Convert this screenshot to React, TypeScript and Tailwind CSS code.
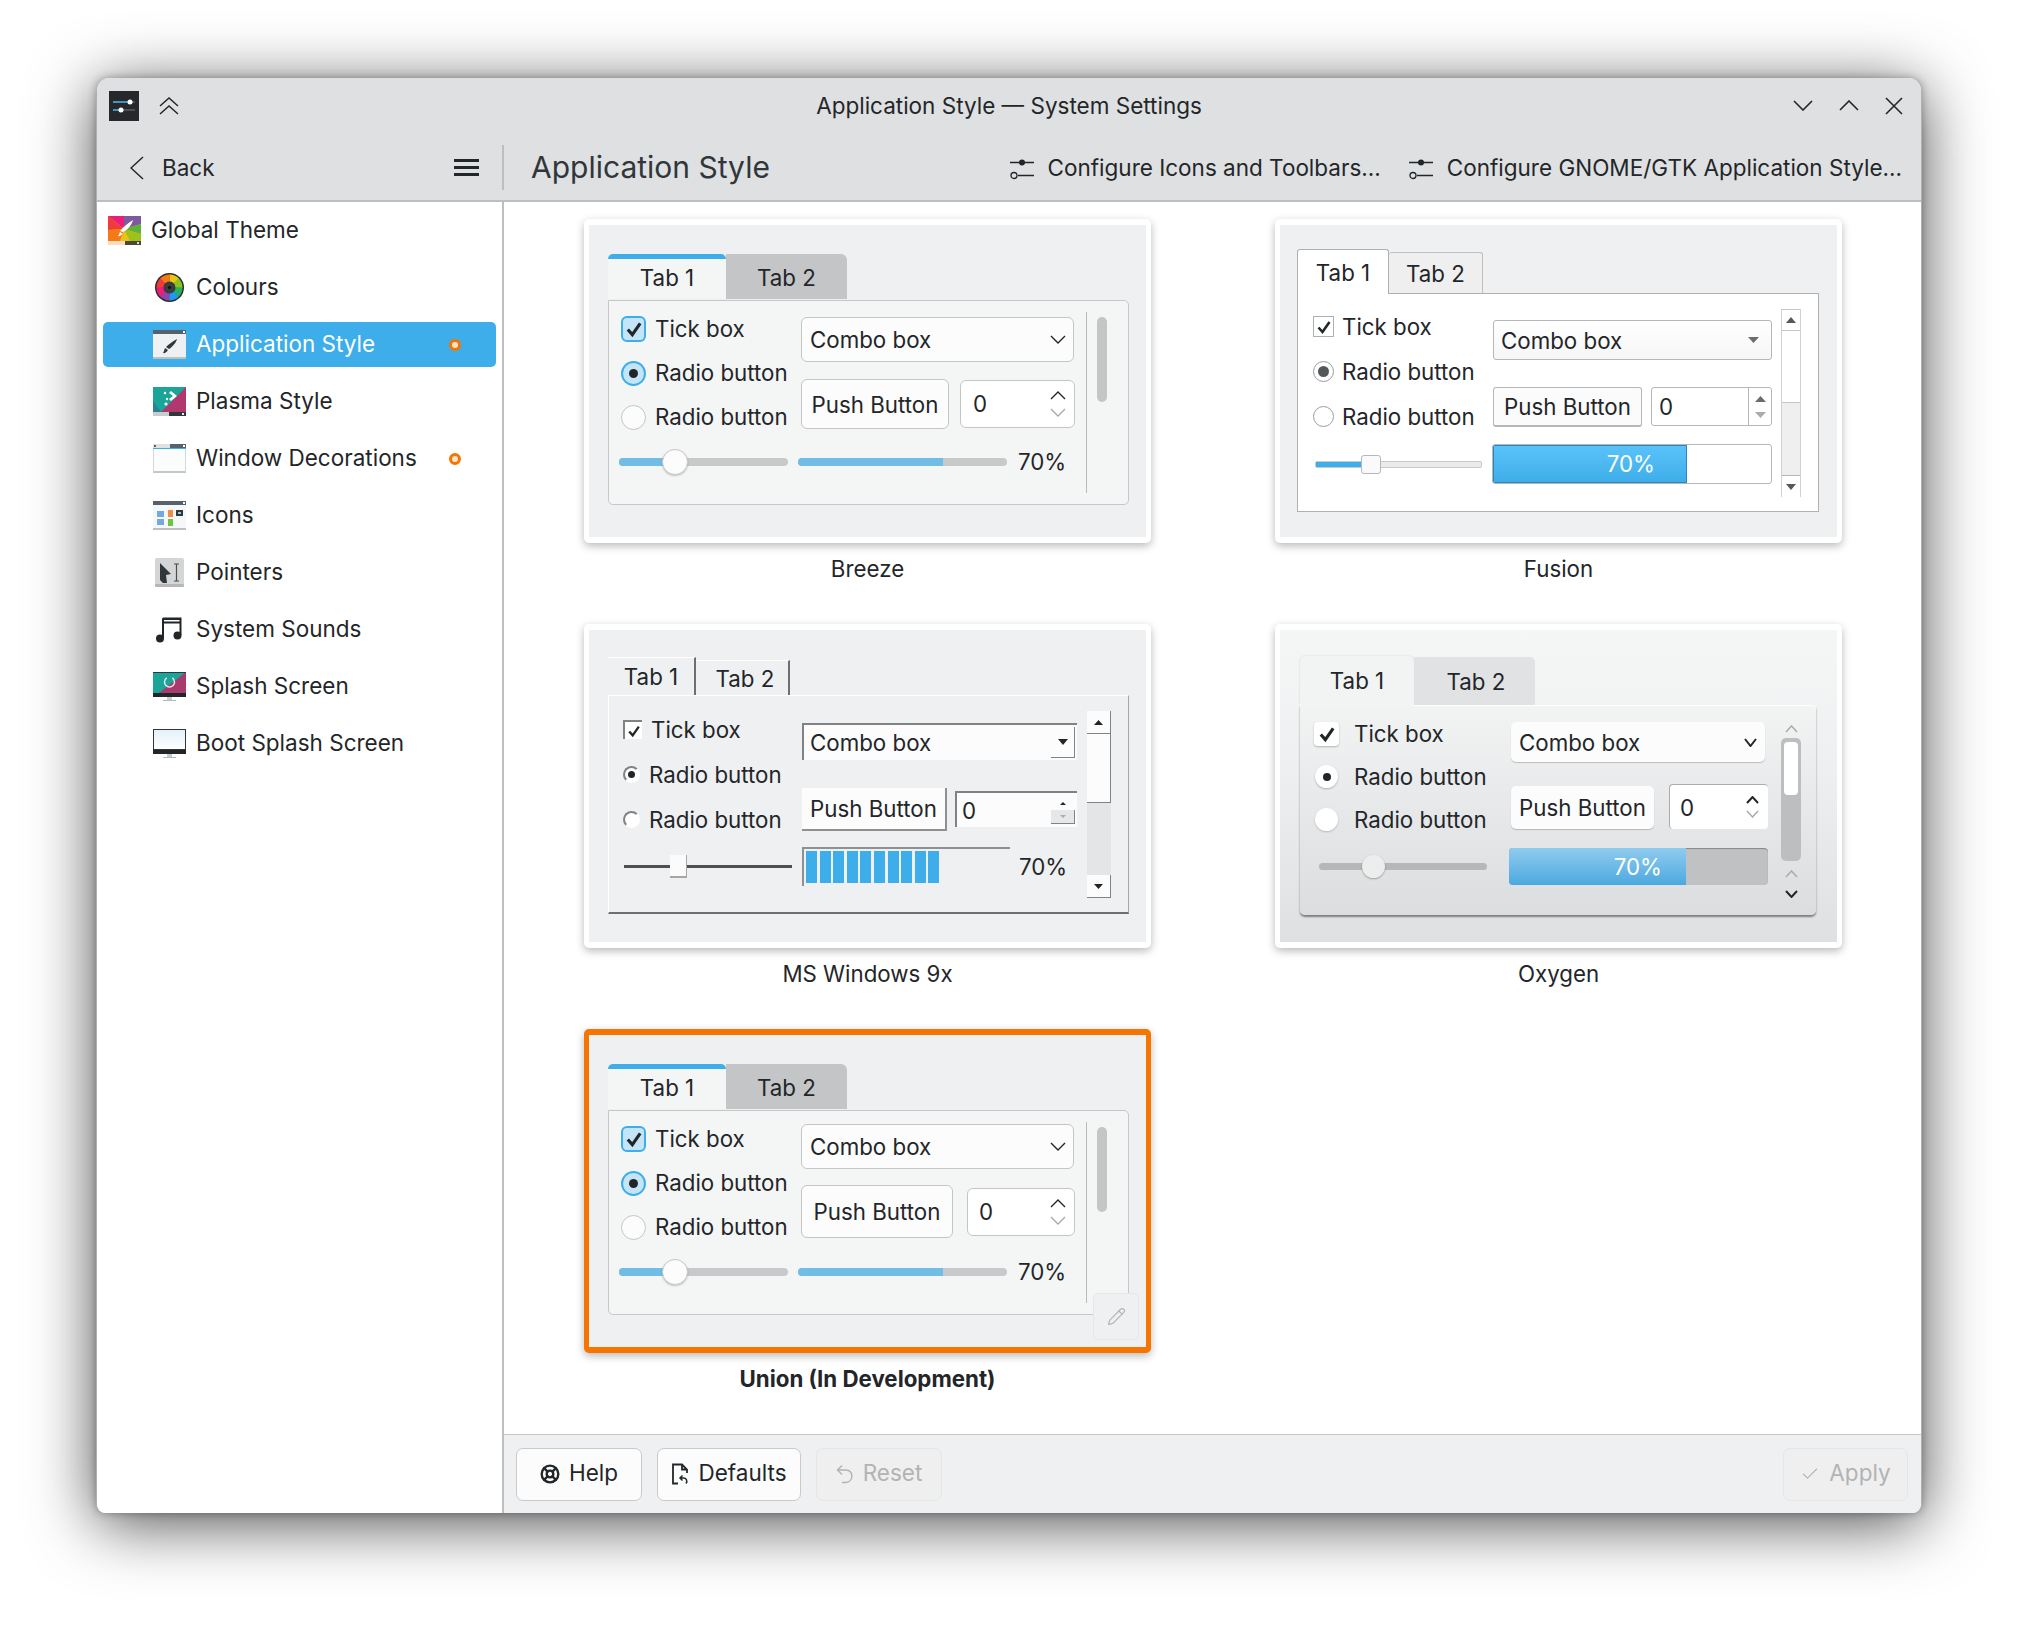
import { Check, LifeBuoy, Pencil } from 'lucide-react';

const T = 'text-[22.3px] leading-[27px] text-[#232629] whitespace-nowrap';
const TB = `${T} -translate-y-px`;

function Chevron({ dir = 'down', w = 16, h = 9, color = '#232629', sw = 1.4 }: { dir?: 'up' | 'down' | 'left'; w?: number; h?: number; color?: string; sw?: number }) {
  const pts =
    dir === 'up' ? `1,${h - 1} ${w / 2},1 ${w - 1},${h - 1}`
    : dir === 'left' ? `${w - 1},1 1,${h / 2} ${w - 1},${h - 1}`
    : `1,1 ${w / 2},${h - 1} ${w - 1},1`;
  return (
    <svg width={w} height={h} className="block shrink-0">
      <polyline points={pts} fill="none" stroke={color} strokeWidth={sw} />
    </svg>
  );
}

function Tri({ up = false, color = '#232629', w = 11, h = 6 }: { up?: boolean; color?: string; w?: number; h?: number }) {
  return (
    <svg width={w} height={h} className="block shrink-0">
      <polygon points={up ? `0,${h} ${w / 2},0 ${w},${h}` : `0,0 ${w / 2},${h} ${w},0`} fill={color} />
    </svg>
  );
}

function Tick({ size = 16, sw = 2.6 }: { size?: number; sw?: number }) {
  return (
    <svg width={size} height={size} viewBox="0 0 16 16" className="block">
      <polyline points="2.5,8.5 6.5,13 13.5,3" fill="none" stroke="#232629" strokeWidth={sw} />
    </svg>
  );
}

/* ---------- sidebar icons ---------- */

function Rainbow() {
  return (
    <>
      <rect width="33" height="25" fill="#e8c31a" />
      <polygon points="0,0 16,0 16,13" fill="#e91e78" />
      <polygon points="0,0 0,14 16,13" fill="#ef3b3b" />
      <polygon points="0,14 0,25 12,25 16,13" fill="#f47a16" />
      <polygon points="16,0 33,0 33,8 16,13" fill="#7c5a9e" />
      <polygon points="33,8 33,18 16,13" fill="#5fb13d" />
      <polygon points="33,18 33,25 22,25 16,13" fill="#9fc11a" />
    </>
  );
}

function GlobalThemeIcon() {
  return (
    <svg width="33" height="29" viewBox="0 0 33 29" className="block shrink-0">
      <Rainbow />
      <path d="M25 4 C 24 9, 19 14, 15 16 L 12 15 C 15 11, 20 7, 25 4 Z" fill="#fff" />
      <path d="M12 16 L 14.5 17.5 C 13 20, 11 20.5, 10 20 C 11 19, 11 18, 12 16 Z" fill="#fff" />
      <rect y="25" width="17" height="4" fill="#fbdcc0" />
      <rect x="17" y="25" width="16" height="4" fill="#4b4b33" />
      <rect x="29" y="26" width="2" height="2" fill="#ddd" />
    </svg>
  );
}

function ColoursIcon() {
  const cols = ['#e8c31a', '#8cc21f', '#27ae60', '#1d99f3', '#8e44ad', '#e91e78', '#ef3b3b', '#f47a16'];
  const r = 9.5;
  const c = 2 * Math.PI * r;
  return (
    <svg width="29" height="29" viewBox="0 0 29 29" className="block shrink-0">
      <circle cx="14.5" cy="14.5" r="14.5" fill="#2b2d30" />
      {cols.map((col, i) => (
        <circle key={col} cx="14.5" cy="14.5" r={r} fill="none" stroke={col} strokeWidth="7" strokeDasharray={`${c / 8 + 0.3} ${c}`} transform={`rotate(${i * 45 - 90} 14.5 14.5)`} />
      ))}
      <circle cx="14.5" cy="14.5" r="5.5" fill="#3a3d40" />
      <circle cx="14.5" cy="14.5" r="1.6" fill="#111" />
    </svg>
  );
}

function AppStyleIcon() {
  return (
    <svg width="33" height="29" viewBox="0 0 33 29" className="block shrink-0">
      <rect width="33" height="29" fill="#eef0f1" />
      <rect width="33" height="4" fill="#56616e" />
      <rect x="30" y="1" width="2" height="2" fill="#fff" />
      <rect y="27" width="33" height="2" fill="#bcc0c2" />
      <path d="M24 9 C 23 13, 19 17, 16 19 L 13 17 C 16 14, 20 11, 24 9 Z" fill="#31363b" />
      <path d="M12 18 L 15 20 C 13 23, 11 23.5, 10 23 C 11 22, 11 20, 12 18 Z" fill="#31363b" />
    </svg>
  );
}

function PlasmaIcon() {
  return (
    <svg width="33" height="29" viewBox="0 0 33 29" className="block shrink-0">
      <rect width="33" height="25" fill="#1aa598" />
      <polygon points="33,0 33,25 8,25" fill="#b0386f" />
      <polygon points="0,25 0,14 8,25" fill="#2f7f94" />
      <polygon points="18,4 24,9 18,14 16,12 20,9 16,6" fill="#fff" />
      <circle cx="12" cy="6" r="1.2" fill="#fff" />
      <circle cx="14" cy="12" r="1.2" fill="#fff" />
      <circle cx="13" cy="17" r="1.6" fill="#fff" />
      <rect y="25" width="16" height="4" fill="#c9cdce" />
      <rect x="16" y="25" width="17" height="4" fill="#31363b" />
      <rect x="29" y="26" width="2" height="2" fill="#eee" />
    </svg>
  );
}

function WindowDecoIcon() {
  return (
    <svg width="33" height="29" viewBox="0 0 33 29" className="block shrink-0">
      <rect width="33" height="29" fill="#fbfcfc" />
      <rect width="17" height="4" fill="#dfe1e3" />
      <rect x="17" width="16" height="4" fill="#56616e" />
      <rect y="4" width="33" height="1" fill="#3daee9" />
      <rect x="1" y="1" width="2" height="2" fill="#56616e" />
      <rect x="30" y="1" width="2" height="2" fill="#fff" />
      <rect y="27" width="33" height="2" fill="#c4c8ca" />
      <rect y="5" width="1" height="23" fill="#d5d8da" />
      <rect x="32" y="5" width="1" height="23" fill="#d5d8da" />
    </svg>
  );
}

function IconsIcon() {
  return (
    <svg width="33" height="29" viewBox="0 0 33 29" className="block shrink-0">
      <rect width="33" height="29" fill="#f6f7f8" />
      <rect width="33" height="4" fill="#56616e" />
      <rect x="30" y="1" width="2" height="2" fill="#fff" />
      <rect y="27" width="33" height="2" fill="#bcc0c2" />
      <rect x="4" y="10" width="7" height="6" fill="#74a9e0" />
      <rect x="4" y="18" width="7" height="6" fill="#74a9e0" />
      <rect x="15" y="9" width="5" height="7" fill="#f58a42" />
      <rect x="15" y="18" width="5" height="7" fill="#6cc644" />
      <rect x="23" y="9" width="7" height="6" fill="#31363b" />
      <rect x="25" y="11" width="3" height="2" fill="#7fc8f0" />
    </svg>
  );
}

function PointersIcon() {
  return (
    <svg width="29" height="29" viewBox="0 0 29 29" className="block shrink-0">
      <rect width="29" height="29" rx="2" fill="#d3d5d7" />
      <rect y="26" width="29" height="3" rx="1" fill="#b5b8ba" />
      <polygon points="5,5 16,16 11,17 12,25 8,25 5,22" fill="#31363b" />
      <path d="M19 6 h5 M21.5 6 v17 M19 23 h5" stroke="#4d4d4d" strokeWidth="1.2" fill="none" />
    </svg>
  );
}

function SoundsIcon() {
  return (
    <svg width="27" height="26" viewBox="0 0 27 26" className="block shrink-0">
      <path d="M6 21 V2 a1.5 1.5 0 0 1 1.5-1.5 H25.5 V18 h-2 V6.5 H8 V21 Z" fill="#232629" />
      <rect x="8" y="3" width="15.5" height="1.5" fill="#fff" />
      <circle cx="4" cy="21.5" r="4" fill="#232629" />
      <circle cx="21.5" cy="18.5" r="4" fill="#232629" />
    </svg>
  );
}

function SplashIcon({ boot = false }: { boot?: boolean }) {
  return (
    <svg width="33" height="29" viewBox="0 0 33 29" className="block shrink-0">
      {boot ? (
        <>
          <defs>
            <linearGradient id="bootfill" x1="0" y1="0" x2="0" y2="1">
              <stop offset="0" stopColor="#e2f1fb" />
              <stop offset="1" stopColor="#ffffff" />
            </linearGradient>
          </defs>
          <rect x="0.5" y="0.5" width="32" height="20" fill="url(#bootfill)" stroke="#31363b" />
        </>
      ) : (
        <>
          <rect width="33" height="21" fill="#1aa598" />
          <polygon points="33,0 33,21 6,21" fill="#a93a6e" />
          <rect width="33" height="1" fill="#31363b" />
          <circle cx="16.5" cy="10" r="5" fill="none" stroke="#e6e6e6" strokeWidth="1.5" strokeDasharray="20 6" />
        </>
      )}
      <rect y="21" width="33" height="4" fill="#232629" />
      <rect x="14" y="25" width="5" height="3" fill="#c8cccf" />
      <rect x="10" y="28" width="13" height="1" fill="#b5b8ba" />
    </svg>
  );
}

function ChangedDot() {
  return <span className="ml-auto mr-[35px] h-3 w-3 rounded-full border-[3px] border-[#f67400] bg-[#fde3cc]" />;
}

function NavRow({ icon, label, active, dot, top }: { icon: React.ReactNode; label: string; active?: boolean; dot?: boolean; top?: boolean }) {
  return (
    <div className="flex h-[57px] items-center">
      <div className={`ml-[6px] flex h-[45px] w-[393px] items-center gap-[10px] rounded-[5px] ${top ? 'pl-[5px]' : 'pl-[50px]'} ${active ? 'bg-[#3daee9] text-white' : 'text-[#232629]'}`}>
        <span className="flex w-[33px] justify-center">{icon}</span>
        <span className="-translate-y-px text-[22.5px] leading-[27px] whitespace-nowrap">{label}</span>
        {dot && <ChangedDot />}
      </div>
    </div>
  );
}

/* ---------- shared by Breeze and Union ---------- */

function BreezeHandleSlider() {
  return (
    <div className="relative h-2 w-[169px] rounded-full bg-[#c8c9cb]">
      <div className="h-2 w-[56px] rounded-l-full bg-[#71bde6]" />
      <div className="absolute left-[43px] top-[-9px] h-[26px] w-[26px] rounded-full border border-[#c8c9cb] bg-[#fcfcfc] shadow-[0_1px_2px_rgba(0,0,0,0.2)]" />
    </div>
  );
}

function BreezePreview({ union }: { union?: boolean }) {
  return (
    <div className="pl-[19px] pt-[30px]">
      <div className="flex h-[45px]">
        <div className={`flex w-[118px] items-center justify-center rounded-t-[5px] border-t-[5px] border-[#3daee9] bg-[#f4f5f5] pb-[4px] ${TB}`}>Tab 1</div>
        <div className={`flex w-[121px] items-center justify-center rounded-tr-[6px] bg-[#c4c5c7] pt-[1px] ${TB}`}>Tab 2</div>
      </div>
      <div className="flex h-[205px] w-[521px] rounded-b-[5px] rounded-tr-[5px] border border-[#c5c7c9] bg-[#f4f5f5] pl-[10px] pt-[6px]">
        <div className="w-[456px]">
          <div className="flex h-[132px]">
            <div className="flex w-[182px] flex-col pl-[2px]">
              <div className="flex h-[44px] items-center gap-[9px]">
                <span className="flex h-[26px] w-[25px] items-center justify-center rounded-[6px] border-2 border-[#3daee9] bg-[#c4e4f7]"><Tick size={18} sw={2.8} /></span>
                <span className={TB}>Tick box</span>
              </div>
              <div className="flex h-[44px] items-center gap-[9px]">
                <span className="flex h-[25px] w-[25px] items-center justify-center rounded-full border-2 border-[#3daee9] bg-[#c4e4f7]"><span className="h-[9px] w-[9px] rounded-full bg-[#232629]" /></span>
                <span className={TB}>Radio button</span>
              </div>
              <div className="flex h-[44px] items-center gap-[9px]">
                <span className="h-[25px] w-[25px] rounded-full border border-[#c4c5c7] bg-[#fcfcfc]" />
                <span className={TB}>Radio button</span>
              </div>
            </div>
            <div className={`flex flex-col ${union ? 'pt-[7px]' : 'pt-[10px]'}`}>
              <div className="flex h-[45px] w-[273px] items-center justify-between rounded-[6px] border border-[#c4c5c7] bg-[#fcfcfc] pl-[8px] pr-[7px]">
                <span className={T}>Combo box</span>
                <Chevron />
              </div>
              {union ? (
                <div className="mt-[16px] flex h-[53px] items-center">
                  <div className={`flex h-[53px] w-[152px] items-center justify-center rounded-[6px] border border-[#c4c5c7] bg-[#fcfcfc] ${T}`}>Push Button</div>
                  <div className="ml-[14px] flex h-[48px] w-[108px] items-center justify-between rounded-[6px] border border-[#c4c5c7] bg-white pl-[11px] pr-[8px]">
                    <span className={T}>0</span>
                    <div className="flex flex-col gap-[8px]"><Chevron dir="up" /><Chevron color="#a9abad" /></div>
                  </div>
                </div>
              ) : (
                <div className="mt-[18px] flex items-start">
                  <div className={`flex h-[50px] w-[148px] items-center justify-center rounded-[6px] border border-[#c4c5c7] bg-[#fcfcfc] ${TB}`}>Push Button</div>
                  <div className="ml-[11px] flex h-[48px] w-[115px] items-center justify-between rounded-[6px] border border-[#c4c5c7] bg-white pl-[12px] pr-[8px]">
                    <span className={TB}>0</span>
                    <div className="flex flex-col gap-[8px]"><Chevron dir="up" /><Chevron color="#a9abad" /></div>
                  </div>
                </div>
              )}
            </div>
          </div>
          <div className="flex h-[46px] items-center">
            <BreezeHandleSlider />
            <div className="ml-[10px] h-2 w-[209px] overflow-hidden rounded-full bg-[#c8c9cb]">
              <div className="h-2 w-[145px] bg-[#71bde6]" />
            </div>
            <span className={`ml-[11px] ${TB}`}>70%</span>
          </div>
        </div>
        <div className="ml-[11px] mt-[5px] h-[181px] w-px bg-[#b9bbbd]" />
        <div className="ml-[10px] mt-[10px] h-[85px] w-[10px] rounded-full bg-[#c4c5c7]" />
      </div>
    </div>
  );
}

/* ---------- Fusion ---------- */

function FusionPreview() {
  return (
    <div className="pl-[17px] pt-[24px]">
      <div className="flex h-[44px] items-end">
        <div className={`z-10 -mb-px flex h-[45px] w-[92px] items-center justify-center rounded-t-[3px] border border-b-0 border-[#aeb0b2] bg-white ${T}`}>Tab 1</div>
        <div className={`flex h-[41px] w-[94px] items-center justify-center rounded-t-[3px] border border-l-0 border-b-0 border-[#bdbfc1] bg-[#efefef] ${T}`}>Tab 2</div>
      </div>
      <div className="flex h-[219px] w-[522px] border border-[#aeb0b2] bg-white pl-[15px] pt-[10px]">
        <div className="w-[459px]">
          <div className="flex h-[140px]">
            <div className="flex w-[180px] flex-col">
              <div className="flex h-[45px] items-center gap-[8px]">
                <span className="flex h-[21px] w-[21px] items-center justify-center border border-[#aeb0b2] bg-white"><Tick size={16} sw={2.6} /></span>
                <span className={T}>Tick box</span>
              </div>
              <div className="flex h-[45px] items-center gap-[8px]">
                <span className="flex h-[21px] w-[21px] items-center justify-center rounded-full border border-[#9a9c9e] bg-white"><span className="h-[11px] w-[11px] rounded-full bg-[#55585b]" /></span>
                <span className={T}>Radio button</span>
              </div>
              <div className="flex h-[45px] items-center gap-[8px]">
                <span className="h-[21px] w-[21px] rounded-full border border-[#9a9c9e] bg-white" />
                <span className={T}>Radio button</span>
              </div>
            </div>
            <div className="flex flex-col pt-[16px]">
              <div className="flex h-[40px] w-[279px] items-center justify-between rounded-[3px] border border-[#b5b7b9] bg-linear-to-b from-white to-[#f6f6f6] pl-[7px] pr-[12px]">
                <span className={T}>Combo box</span>
                <Tri color="#6a6d70" />
              </div>
              <div className="mt-[27px] flex">
                <div className={`flex h-[40px] w-[149px] items-center justify-center rounded-[3px] border border-b-2 border-[#b5b7b9] bg-[#fbfbfb] ${T}`}>Push Button</div>
                <div className="ml-[9px] flex h-[39px] w-[121px] rounded-[3px] border border-[#b5b7b9] bg-white">
                  <span className={`flex flex-1 items-center pl-[7px] ${T}`}>0</span>
                  <div className="flex w-[23px] flex-col items-center justify-center gap-[10px] border-l border-[#b5b7b9]"><Tri up color="#6a6d70" /><Tri color="#a9abad" /></div>
                </div>
              </div>
            </div>
          </div>
          <div className="flex h-[40px] items-center">
            <div className="relative ml-[2px] h-[7px] w-[167px] rounded-[2px] border border-[#c9cacc] bg-[#e9eaeb]">
              <div className="h-full w-[48px] bg-[#3daee9]" />
              <div className="absolute left-[45px] top-[-7px] h-[19px] w-[20px] rounded-[3px] border border-[#b5b7b9] bg-[#fafafa]" />
            </div>
            <div className="relative ml-[10px] h-[40px] w-[280px] overflow-hidden rounded-[3px] border border-[#b5b7b9] bg-white">
              <div className="flex h-full w-[194px] items-center justify-end border border-[#2a86bd] bg-linear-to-b from-[#5ac2fa] to-[#3daee9] pr-[31px] text-[22.3px] text-white">70%</div>
            </div>
          </div>
        </div>
        <div className="ml-[9px] mt-[5px] flex h-[188px] w-[20px] flex-col border-x border-[#d0d2d4] bg-white">
          <div className="flex h-[22px] items-center justify-center border-y border-[#c4c5c7]"><Tri up w={10} color="#55585b" /></div>
          <div className="h-[71px]" />
          <div className="h-[73px] border-t border-[#c4c5c7] bg-[#efefef]" />
          <div className="flex h-[22px] items-center justify-center border-t border-[#b5b7b9]"><Tri w={10} color="#55585b" /></div>
        </div>
      </div>
    </div>
  );
}

/* ---------- MS Windows 9x ---------- */

function WinPreview() {
  return (
    <div className="pl-[19px] pt-[27px]">
      <div className="flex h-[38px] items-end">
        <div className={`flex h-[38px] w-[88px] items-center justify-center border-r-2 border-t border-r-[#6d6f71] border-t-white ${T}`}>Tab 1</div>
        <div className={`flex h-[35px] w-[94px] items-center justify-center border-r-2 border-t border-r-[#6d6f71] border-t-white pl-[6px] ${T}`}>Tab 2</div>
      </div>
      <div className="flex h-[219px] w-[521px] border border-b-2 border-l-white border-t-white border-r-[#a5a6a8] border-b-[#6d6f71] pl-[14px] pt-[11px]">
        <div className="w-[455px]">
          <div className="flex h-[140px]">
            <div className="flex w-[179px] flex-col">
              <div className="flex h-[45px] items-center gap-[9px]">
                <span className="flex h-[19px] w-[19px] items-center justify-center border-l-2 border-t-2 border-[#808284] bg-white"><Tick size={14} sw={2.6} /></span>
                <span className={T}>Tick box</span>
              </div>
              <div className="flex h-[45px] items-center gap-[9px]">
                <span className="flex h-[17px] w-[17px] items-center justify-center rounded-full border-2 border-[#808284] border-b-white border-r-white bg-white"><span className="h-[7px] w-[7px] rounded-full bg-[#232629]" /></span>
                <span className={T}>Radio button</span>
              </div>
              <div className="flex h-[45px] items-center gap-[9px]">
                <span className="h-[17px] w-[17px] rounded-full border-2 border-[#808284] border-b-white border-r-white bg-white" />
                <span className={T}>Radio button</span>
              </div>
            </div>
            <div className="flex flex-col pt-[16px]">
              <div className="flex h-[37px] w-[275px] items-center justify-between border-l-2 border-t-2 border-[#808284] bg-[#fcfcfc] pl-[6px] pr-[2px]">
                <span className={T}>Combo box</span>
                <span className="flex h-[31px] w-[24px] items-center justify-center border-b border-r border-[#808284]"><Tri w={10} h={6} /></span>
              </div>
              <div className="mt-[28px] flex items-start">
                <div className={`flex h-[43px] w-[145px] items-center justify-center border-b-2 border-r-2 border-[#8e9092] bg-[#fcfcfc] ${T}`}>Push Button</div>
                <div className="ml-[8px] mt-[3px] flex h-[36px] w-[122px] items-center justify-between border-l-2 border-t-2 border-[#808284] bg-[#fcfcfc] pl-[5px] pr-[2px]">
                  <span className={T}>0</span>
                  <div className="flex w-[24px] flex-col">
                    <span className="flex h-[14px] items-center justify-center"><Tri up w={6} h={3} /></span>
                    <span className="flex h-[14px] items-center justify-center border-b border-r border-[#808284] bg-[#e6e7e8]"><Tri w={6} h={3} color="#a9abad" /></span>
                  </div>
                </div>
              </div>
            </div>
          </div>
          <div className="flex h-[39px] items-center">
            <div className="relative ml-[1px] h-[3px] w-[168px] bg-[#4d4f52]">
              <div className="absolute left-[46px] top-[-10px] h-[23px] w-[17px] border-b-2 border-r border-[#a5a6a8] bg-[#fbfbfb]" />
            </div>
            <div className="ml-[10px] flex h-[39px] w-[208px] gap-[2.6px] border-l-2 border-t-2 border-[#8e9092] py-[2px] pl-[2px]">
              {Array.from({ length: 10 }).map((_, i) => (
                <span key={i} className="h-[32px] w-[11px] bg-[#3daee9]" />
              ))}
            </div>
            <span className={`ml-[9px] ${T}`}>70%</span>
          </div>
        </div>
        <div className="ml-[9px] mt-[4px] flex h-[187px] w-[24px] flex-col">
          <div className="flex h-[23px] items-center justify-center border-b border-r border-[#808284] bg-[#fcfcfc]"><Tri up w={9} h={5} /></div>
          <div className="h-[69px] border-b border-r border-[#808284] bg-[#fcfcfc]" />
          <div className="h-[72px] bg-[#e4e5e6]" />
          <div className="flex h-[23px] items-center justify-center border-b border-r border-[#808284] bg-[#fcfcfc]"><Tri w={9} h={5} /></div>
        </div>
      </div>
    </div>
  );
}

/* ---------- Oxygen ---------- */

function OxygenPreview() {
  return (
    <div className="h-full bg-[linear-gradient(180deg,#f5f6f6_0%,#eeeff0_45%,#dfe0e2_100%)] pl-[19px] pt-[26px]">
      <div className="flex h-[49px] items-end pl-[1px]">
        <div className={`flex h-[49px] w-[114px] items-center justify-center rounded-t-[5px] bg-[#f2f3f3] shadow-[0_0_2px_rgba(0,0,0,0.15)] ${T}`}>Tab 1</div>
        <div className={`flex h-[48px] w-[121px] items-center justify-center rounded-tr-[5px] bg-[#e1e2e4] pl-[3px] ${T}`}>Tab 2</div>
      </div>
      <div className="ml-[1px] flex h-[210px] w-[516px] rounded-b-[5px] rounded-tr-[4px] border-t border-t-white bg-linear-to-b from-[#f2f3f3] to-[#dcdddf] pl-[14px] pt-[6px] shadow-[0_2px_2px_rgba(0,0,0,0.45)]">
        <div className="w-[454px]">
          <div className="flex h-[136px]">
            <div className="flex w-[197px] flex-col">
              <div className="flex h-[43px] items-center gap-[15px]">
                <span className="flex h-[24px] w-[25px] items-center justify-center rounded-[4px] bg-white shadow-[0_1px_2px_rgba(0,0,0,0.25)]"><Tick size={18} sw={2.8} /></span>
                <span className={T}>Tick box</span>
              </div>
              <div className="flex h-[43px] items-center gap-[15px]">
                <span className="flex w-[25px] justify-center"><span className="flex h-[23px] w-[23px] items-center justify-center rounded-full bg-white shadow-[0_1px_2px_rgba(0,0,0,0.25)]"><span className="h-2 w-2 rounded-full bg-[#232629]" /></span></span>
                <span className={T}>Radio button</span>
              </div>
              <div className="flex h-[43px] items-center gap-[15px]">
                <span className="flex w-[25px] justify-center"><span className="h-[23px] w-[23px] rounded-full bg-white shadow-[0_1px_2px_rgba(0,0,0,0.2)]" /></span>
                <span className={T}>Radio button</span>
              </div>
            </div>
            <div className="flex flex-col pt-[10px]">
              <div className="flex h-[40px] w-[254px] items-center justify-between rounded-[5px] bg-[#fcfcfc] pl-[8px] pr-[8px] shadow-[0_1px_1px_rgba(0,0,0,0.2)]">
                <span className={T}>Combo box</span>
                <Chevron w={13} h={9} sw={2} />
              </div>
              <div className="mt-[24px] flex items-start">
                <div className={`flex h-[43px] w-[143px] items-center justify-center rounded-[5px] bg-[#fcfcfc] shadow-[0_1px_1px_rgba(0,0,0,0.2)] ${T}`}>Push Button</div>
                <div className="-mt-[2px] ml-[15px] flex h-[45px] w-[99px] items-center justify-between rounded-[4px] border-l border-t border-[#a9abad] bg-white pl-[10px] pr-[9px]">
                  <span className={T}>0</span>
                  <div className="flex flex-col gap-[6px]"><Chevron dir="up" w={13} h={8} sw={2} /><Chevron w={13} h={8} sw={1.5} color="#a9abad" /></div>
                </div>
              </div>
            </div>
          </div>
          <div className="flex h-[37px] items-center">
            <div className="relative ml-[5px] h-[7px] w-[168px] rounded-full bg-[#b5b7b9]">
              <div className="absolute left-[43px] top-[-8px] h-[23px] w-[23px] rounded-full bg-[#eceded] shadow-[0_1px_2px_rgba(0,0,0,0.3)]" />
            </div>
            <div className="ml-[22px] h-[37px] w-[259px] overflow-hidden rounded-[4px] bg-[#bfc1c3] shadow-[inset_0_1px_1px_rgba(0,0,0,0.3)]">
              <div className="flex h-full w-[177px] items-center justify-end bg-linear-to-b from-[#8fcbee] to-[#4aa9df] pr-[24px] text-[22.3px] text-white">70%</div>
            </div>
          </div>
        </div>
        <div className="ml-[13px] mt-[8px] flex w-[20px] flex-col items-center">
          <div className="flex h-[18px] items-center"><Chevron dir="up" w={13} h={8} sw={1.5} color="#a9abad" /></div>
          <div className="h-[123px] w-[20px] rounded-[5px] bg-[#bcbec0] px-[3px] pt-[4px]">
            <div className="h-[53px] rounded-[4px] bg-white" />
          </div>
          <div className="mt-[8px] flex h-[10px] items-center"><Chevron dir="up" w={13} h={8} sw={1.5} color="#a9abad" /></div>
          <div className="mt-[10px] flex h-[10px] items-center"><Chevron w={13} h={8} sw={2} /></div>
        </div>
      </div>
    </div>
  );
}

function Card({ label, selected, children }: { label: string; selected?: boolean; children: React.ReactNode }) {
  return (
    <div className="h-[405px]">
      <div className={`relative h-[324px] overflow-hidden rounded-[5px] border-x-[5px] border-y-[6px] bg-[#eff0f1] shadow-[0_3px_8px_rgba(0,0,0,0.28)] ${selected ? 'border-[#f67400]' : 'border-white'}`}>
        {children}
        {selected && (
          <div className="absolute bottom-[7px] right-[7px] flex h-[47px] w-[46px] items-center justify-center rounded-[5px] border border-[#e6e7e8] bg-[#eff0f1]">
            <Pencil size={19} strokeWidth={1.5} color="#b4b6b8" />
          </div>
        )}
      </div>
      <div className={`pt-[12px] text-center text-[22.3px] leading-[27px] text-[#232629] ${selected ? 'font-bold' : ''}`}>{label}</div>
    </div>
  );
}

function ConfigureIcon() {
  return (
    <svg width="24" height="24" viewBox="0 0 24 24" className="block shrink-0">
      <path d="M0 6.5 h24" stroke="#232629" strokeWidth="1.5" />
      <circle cx="12" cy="6.5" r="3" fill="#232629" />
      <path d="M8 19.5 h16" stroke="#232629" strokeWidth="1.5" />
      <circle cx="4" cy="19.5" r="3" fill="none" stroke="#232629" strokeWidth="1.3" />
    </svg>
  );
}

function FooterBtn({ icon, label, w, disabled }: { icon: React.ReactNode; label: string; w: string; disabled?: boolean }) {
  return (
    <div className={`flex h-[53px] items-center justify-center gap-[9px] rounded-[7px] border text-[22.5px] ${w} ${disabled ? 'border-[#e5e6e7] bg-[#efefef] text-[#b2b3b4]' : 'border-[#c9cacc] bg-[#fcfcfc] text-[#232629]'}`}>
      {icon}
      <span className="-translate-y-px">{label}</span>
    </div>
  );
}

export default function App() {
  return (
    <div className="h-[1628px] w-[2018px] overflow-hidden bg-white pl-[96px] pt-[78px] font-[Inter,sans-serif]">
      <div className="flex h-[1435px] w-[1826px] flex-col overflow-hidden rounded-t-[13px] rounded-b-[9px] border-x border-[#aeb0b2] bg-white shadow-[0_10px_65px_rgba(0,0,0,0.7),0_0_8px_rgba(0,0,0,0.3)]">
        <div className="shrink-0 border-b-2 border-[#bcbec0] bg-[#dee0e2]">
          {/* title bar */}
          <div className="relative flex h-[56px] items-center pb-[1px] pl-[12px]">
            <svg width="30" height="30" viewBox="0 0 30 30" className="block shrink-0">
              <rect width="30" height="30" fill="#26282b" />
              <path d="M4 11 h22" stroke="#5b5e61" strokeWidth="1.5" />
              <path d="M4 11 h16" stroke="#3daee9" strokeWidth="1.5" />
              <circle cx="21" cy="11" r="2.5" fill="#fff" />
              <path d="M4 19 h22" stroke="#5b5e61" strokeWidth="1.5" />
              <path d="M4 19 h8" stroke="#3daee9" strokeWidth="1.5" />
              <circle cx="12" cy="19" r="2.5" fill="#fff" />
            </svg>
            <svg width="20" height="20" viewBox="0 0 20 20" className="ml-[20px] block">
              <polyline points="1,10 10,2 19,10" fill="none" stroke="#232629" strokeWidth="1.5" />
              <polyline points="1,18 10,10 19,18" fill="none" stroke="#232629" strokeWidth="1.5" />
            </svg>
            <div className="absolute inset-x-0 text-center text-[22.5px] text-[#232629]">Application Style — System Settings</div>
            <div className="ml-auto flex items-center gap-[26px] pr-[18px]">
              <Chevron w={20} h={11} sw={1.6} />
              <Chevron dir="up" w={20} h={11} sw={1.6} />
              <svg width="18" height="18" className="block"><path d="M1 1 L17 17 M17 1 L1 17" stroke="#232629" strokeWidth="1.6" /></svg>
            </div>
          </div>
          {/* toolbar */}
          <div className="flex h-[66px] items-center pt-[1px]">
            <div className="flex w-[405px] items-center pl-[33px]">
              <Chevron dir="left" w={14} h={24} sw={1.5} />
              <span className="ml-[18px] text-[22.5px] text-[#232629]">Back</span>
              <div className="ml-auto mr-[23px] flex w-[25px] flex-col gap-[4px]">
                <span className="h-[3px] bg-[#232629]" />
                <span className="h-[3px] bg-[#232629]" />
                <span className="h-[3px] bg-[#232629]" />
              </div>
            </div>
            <div className="h-[45px] w-[2px] bg-[#bcbec0]" />
            <span className="ml-[27px] text-[30px] text-[#31363b]">Application Style</span>
            <div className="ml-auto flex items-center pr-[19px] text-[22.5px] text-[#232629]">
              <ConfigureIcon />
              <span className="ml-[14px]">Configure Icons and Toolbars...</span>
              <span className="ml-[28px]"><ConfigureIcon /></span>
              <span className="ml-[14px]">Configure GNOME/GTK Application Style...</span>
            </div>
          </div>
        </div>

        <div className="flex min-h-0 flex-1">
          <aside className="w-[407px] shrink-0 border-r-2 border-[#bcbec0] bg-white">
            <NavRow top icon={<GlobalThemeIcon />} label="Global Theme" />
            <NavRow icon={<ColoursIcon />} label="Colours" />
            <NavRow active dot icon={<AppStyleIcon />} label="Application Style" />
            <NavRow icon={<PlasmaIcon />} label="Plasma Style" />
            <NavRow dot icon={<WindowDecoIcon />} label="Window Decorations" />
            <NavRow icon={<IconsIcon />} label="Icons" />
            <NavRow icon={<PointersIcon />} label="Pointers" />
            <NavRow icon={<SoundsIcon />} label="System Sounds" />
            <NavRow icon={<SplashIcon />} label="Splash Screen" />
            <NavRow icon={<SplashIcon boot />} label="Boot Splash Screen" />
          </aside>

          <main className="flex min-w-0 flex-1 flex-col">
            <div className="min-h-0 flex-1 pl-[80px] pt-[17px]">
              <div className="grid grid-cols-[567px_567px] gap-x-[124px]">
                <Card label="Breeze"><BreezePreview /></Card>
                <Card label="Fusion"><FusionPreview /></Card>
                <Card label="MS Windows 9x"><WinPreview /></Card>
                <Card label="Oxygen"><OxygenPreview /></Card>
                <Card label="Union (In Development)" selected><BreezePreview union /></Card>
              </div>
            </div>
            <div className="flex h-[79px] shrink-0 items-center border-t border-[#c5c7c9] bg-[#eff0f1] pl-[12px] pr-[13px]">
              <FooterBtn w="w-[126px]" label="Help" icon={<LifeBuoy size={20} strokeWidth={2.8} color="#232629" />} />
              <div className="ml-[15px]">
                <FooterBtn w="w-[144px]" label="Defaults" icon={
                  <svg width="18" height="22" viewBox="0 0 18 22" className="block">
                    <path d="M7 20.5 H2 V1.5 H11 L16 6.5 V10 M11 1.5 V6.5 H16" fill="none" stroke="#232629" strokeWidth="1.8" />
                    <path d="M15 20.5 C 17 18, 15 14.5, 12 15 H9 M11.5 12.5 L 9 15 L 11.5 17.5" fill="none" stroke="#232629" strokeWidth="1.5" />
                  </svg>
                } />
              </div>
              <div className="ml-[15px]">
                <FooterBtn disabled w="w-[126px]" label="Reset" icon={
                  <svg width="18" height="20" viewBox="0 0 18 20" className="block">
                    <path d="M6 1.5 L 1.5 6 L 6 10.5 M1.5 6 H10 C 18 6, 18 18.5, 9 18.5 H6" fill="none" stroke="#b2b3b4" strokeWidth="1.4" />
                  </svg>
                } />
              </div>
              <div className="ml-auto">
                <FooterBtn disabled w="w-[125px]" label="Apply" icon={<Check size={20} strokeWidth={1.3} color="#b2b3b4" />} />
              </div>
            </div>
          </main>
        </div>
      </div>
    </div>
  );
}
